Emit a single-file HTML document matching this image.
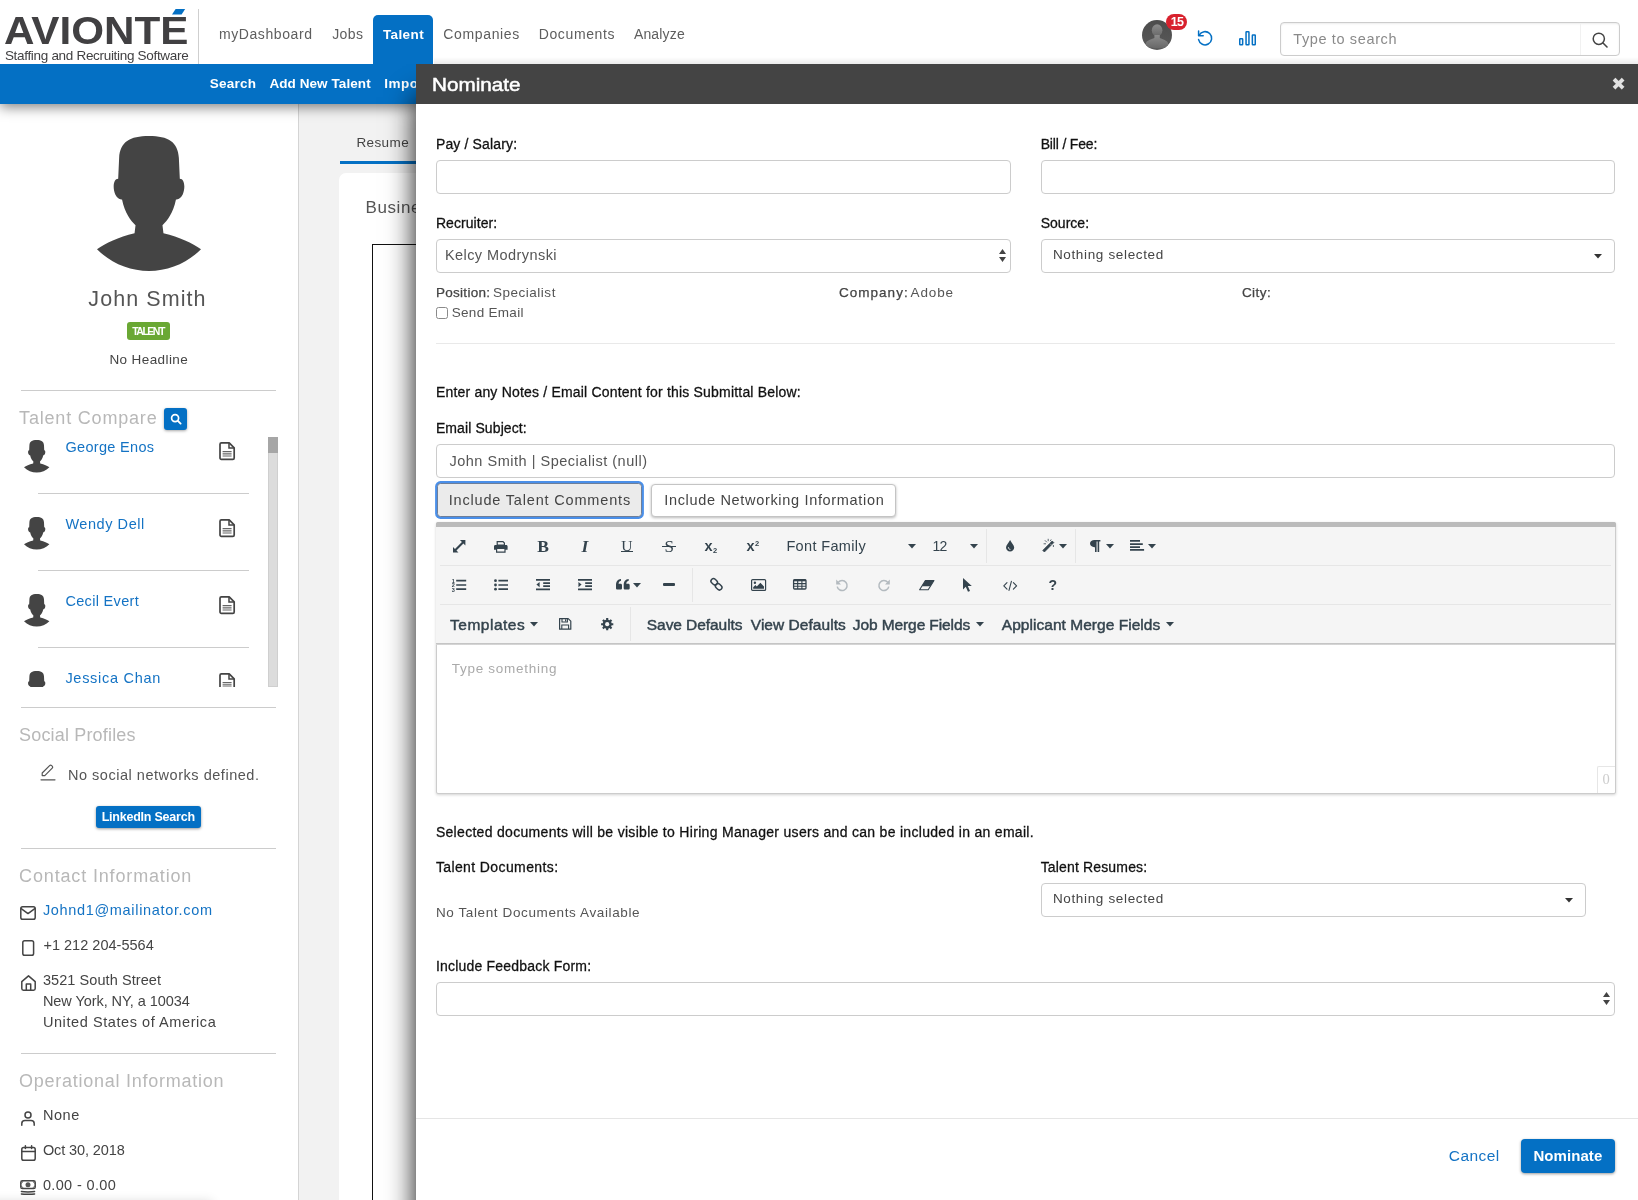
<!DOCTYPE html>
<html lang="en"><head><meta charset="utf-8"><title>Nominate - John Smith</title>
<style>
*{box-sizing:border-box;margin:0;padding:0}
html,body{width:1638px;height:1200px;overflow:hidden;background:#fff;font-family:"Liberation Sans",sans-serif}
body{position:relative;will-change:transform}
.t{position:absolute;white-space:nowrap;display:block}
.a{position:absolute}
svg{position:absolute;overflow:visible}
.hr{position:absolute;height:1px;background:#ccc}
.inp{position:absolute;border:1px solid #ccc;border-radius:4px;background:#fff}
</style></head>
<body>
<div class="a" style="left:299px;top:104px;width:1339px;height:1096px;background:#f2f2f2"></div>
<div class="a" style="left:298px;top:104px;width:1px;height:1096px;background:#d4d4d4"></div>
<span class="t" style="left:356.4px;top:133px;font-size:13.5px;line-height:20px;color:#444;font-family:'Liberation Sans',sans-serif;letter-spacing:0.406px;">Resume</span>
<div class="a" style="left:340px;top:161px;width:120px;height:3px;background:#0470c4"></div>
<div class="a" style="left:339px;top:173px;width:1200px;height:1100px;background:#fff;border-radius:7px"></div>
<span class="t" style="left:365.5px;top:193px;font-size:17px;line-height:30px;color:#555;font-family:'Liberation Sans',sans-serif;letter-spacing:.6px;">Business</span>
<div class="a" style="left:372px;top:244px;width:900px;height:1000px;border:1.5px solid #111"></div>
<div class="a" style="left:0;top:104px;width:298px;height:1096px;background:#fff"></div>
<svg style="left:97px;top:135.5px" width="104" height="135" viewBox="-4 0 108 136" preserveAspectRatio="none"><path d="M50 0 C70 0 80 6 81 22 L82 43 C87 43 88 52 85 59 C83 63 80 64 78 64 C75 78 69 85 64 90 L65 98 C82 102 95 108 104 114 C90 128 70 136 50 136 C30 136 10 128 -4 114 C5 108 18 102 35 98 L36 90 C31 85 25 78 22 64 C20 64 17 63 15 59 C12 52 13 43 18 43 L19 22 C20 6 30 0 50 0 Z" fill="#444"/></svg>
<span class="t" style="left:88.3px;top:284px;font-size:21.5px;line-height:30px;color:#555;font-family:'Liberation Sans',sans-serif;letter-spacing:1.081px;">John Smith</span>
<div class="a" style="left:127px;top:322px;width:43px;height:18px;background:#6aa834;border-radius:3px"></div>
<span class="t" style="left:132.2px;top:321px;font-size:10.5px;line-height:20px;color:#fff;font-family:'Liberation Sans',sans-serif;font-weight:700;letter-spacing:-1.502px;">TALENT</span>
<span class="t" style="left:109.4px;top:350px;font-size:13.5px;line-height:20px;color:#444;font-family:'Liberation Sans',sans-serif;letter-spacing:0.401px;">No Headline</span>
<div class="hr" style="left:21px;top:390px;width:255px"></div>
<span class="t" style="left:19.1px;top:403px;font-size:18px;line-height:30px;color:#b8b8b8;font-family:'Liberation Sans',sans-serif;letter-spacing:0.808px;">Talent Compare</span>
<div class="a" style="left:164px;top:408px;width:23px;height:22px;background:#0470c4;border-radius:3px;box-shadow:0 1px 3px rgba(0,0,0,.35)"></div>
<svg style="left:169.5px;top:413px" width="12" height="12" viewBox="0 0 12 12"><circle cx="5.1" cy="5.1" r="3.5" fill="none" stroke="#fff" stroke-width="1.7"/><path d="M7.9 7.9 L10.6 10.6" stroke="#fff" stroke-width="1.9" stroke-linecap="round"/></svg>
<div class="a" style="left:0;top:437px;width:280px;height:250px;overflow:hidden">
<svg style="left:23.5px;top:3.0px" width="25.4" height="32.5" viewBox="-4 0 108 136" preserveAspectRatio="none"><path d="M50 0 C70 0 80 6 81 22 L82 43 C87 43 88 52 85 59 C83 63 80 64 78 64 C75 78 69 85 64 90 L65 98 C82 102 95 108 104 114 C90 128 70 136 50 136 C30 136 10 128 -4 114 C5 108 18 102 35 98 L36 90 C31 85 25 78 22 64 C20 64 17 63 15 59 C12 52 13 43 18 43 L19 22 C20 6 30 0 50 0 Z" fill="#444"/></svg>
<span class="t" style="left:65.4px;top:0px;font-size:14.5px;line-height:20px;color:#1473c4;font-family:'Liberation Sans',sans-serif;letter-spacing:0.322px;">George Enos</span>
<svg style="left:219px;top:5.2px" width="16.2" height="18.2" viewBox="0 0 16.2 18.2"><path d="M1 2.2 C1 1.4 1.6 .8 2.4 .8 L10.2 .8 L15.2 5.8 L15.2 16 C15.2 16.8 14.6 17.4 13.8 17.4 L2.4 17.4 C1.6 17.4 1 16.8 1 16 Z" fill="#fff" stroke="#444" stroke-width="1.7" stroke-linejoin="round"/><path d="M10 1 L10 6 L15 6" fill="none" stroke="#444" stroke-width="1.5"/><path d="M3.6 9.6 H12.6 M3.6 11.8 H12.6 M3.6 14 H12.6" stroke="#666" stroke-width="1.2"/></svg>
<div class="hr" style="left:38px;top:56px;width:211px"></div>
<svg style="left:23.5px;top:80.0px" width="25.4" height="32.5" viewBox="-4 0 108 136" preserveAspectRatio="none"><path d="M50 0 C70 0 80 6 81 22 L82 43 C87 43 88 52 85 59 C83 63 80 64 78 64 C75 78 69 85 64 90 L65 98 C82 102 95 108 104 114 C90 128 70 136 50 136 C30 136 10 128 -4 114 C5 108 18 102 35 98 L36 90 C31 85 25 78 22 64 C20 64 17 63 15 59 C12 52 13 43 18 43 L19 22 C20 6 30 0 50 0 Z" fill="#444"/></svg>
<span class="t" style="left:65.4px;top:77px;font-size:14.5px;line-height:20px;color:#1473c4;font-family:'Liberation Sans',sans-serif;letter-spacing:0.555px;">Wendy Dell</span>
<svg style="left:219px;top:82.2px" width="16.2" height="18.2" viewBox="0 0 16.2 18.2"><path d="M1 2.2 C1 1.4 1.6 .8 2.4 .8 L10.2 .8 L15.2 5.8 L15.2 16 C15.2 16.8 14.6 17.4 13.8 17.4 L2.4 17.4 C1.6 17.4 1 16.8 1 16 Z" fill="#fff" stroke="#444" stroke-width="1.7" stroke-linejoin="round"/><path d="M10 1 L10 6 L15 6" fill="none" stroke="#444" stroke-width="1.5"/><path d="M3.6 9.6 H12.6 M3.6 11.8 H12.6 M3.6 14 H12.6" stroke="#666" stroke-width="1.2"/></svg>
<div class="hr" style="left:38px;top:133px;width:211px"></div>
<svg style="left:23.5px;top:157.0px" width="25.4" height="32.5" viewBox="-4 0 108 136" preserveAspectRatio="none"><path d="M50 0 C70 0 80 6 81 22 L82 43 C87 43 88 52 85 59 C83 63 80 64 78 64 C75 78 69 85 64 90 L65 98 C82 102 95 108 104 114 C90 128 70 136 50 136 C30 136 10 128 -4 114 C5 108 18 102 35 98 L36 90 C31 85 25 78 22 64 C20 64 17 63 15 59 C12 52 13 43 18 43 L19 22 C20 6 30 0 50 0 Z" fill="#444"/></svg>
<span class="t" style="left:65.4px;top:154px;font-size:14.5px;line-height:20px;color:#1473c4;font-family:'Liberation Sans',sans-serif;letter-spacing:0.326px;">Cecil Evert</span>
<svg style="left:219px;top:159.2px" width="16.2" height="18.2" viewBox="0 0 16.2 18.2"><path d="M1 2.2 C1 1.4 1.6 .8 2.4 .8 L10.2 .8 L15.2 5.8 L15.2 16 C15.2 16.8 14.6 17.4 13.8 17.4 L2.4 17.4 C1.6 17.4 1 16.8 1 16 Z" fill="#fff" stroke="#444" stroke-width="1.7" stroke-linejoin="round"/><path d="M10 1 L10 6 L15 6" fill="none" stroke="#444" stroke-width="1.5"/><path d="M3.6 9.6 H12.6 M3.6 11.8 H12.6 M3.6 14 H12.6" stroke="#666" stroke-width="1.2"/></svg>
<div class="hr" style="left:38px;top:210px;width:211px"></div>
<svg style="left:23.5px;top:234.0px" width="25.4" height="32.5" viewBox="-4 0 108 136" preserveAspectRatio="none"><path d="M50 0 C70 0 80 6 81 22 L82 43 C87 43 88 52 85 59 C83 63 80 64 78 64 C75 78 69 85 64 90 L65 98 C82 102 95 108 104 114 C90 128 70 136 50 136 C30 136 10 128 -4 114 C5 108 18 102 35 98 L36 90 C31 85 25 78 22 64 C20 64 17 63 15 59 C12 52 13 43 18 43 L19 22 C20 6 30 0 50 0 Z" fill="#444"/></svg>
<span class="t" style="left:65.4px;top:231px;font-size:14.5px;line-height:20px;color:#1473c4;font-family:'Liberation Sans',sans-serif;letter-spacing:0.711px;">Jessica Chan</span>
<svg style="left:219px;top:236.2px" width="16.2" height="18.2" viewBox="0 0 16.2 18.2"><path d="M1 2.2 C1 1.4 1.6 .8 2.4 .8 L10.2 .8 L15.2 5.8 L15.2 16 C15.2 16.8 14.6 17.4 13.8 17.4 L2.4 17.4 C1.6 17.4 1 16.8 1 16 Z" fill="#fff" stroke="#444" stroke-width="1.7" stroke-linejoin="round"/><path d="M10 1 L10 6 L15 6" fill="none" stroke="#444" stroke-width="1.5"/><path d="M3.6 9.6 H12.6 M3.6 11.8 H12.6 M3.6 14 H12.6" stroke="#666" stroke-width="1.2"/></svg>
<div class="hr" style="left:38px;top:287px;width:211px"></div>
<div class="a" style="left:268px;top:0;width:10px;height:250px;background:#dcdcdc;border:1px solid #cfcfcf"></div>
<div class="a" style="left:268px;top:0;width:10px;height:16px;background:#a6a6a6"></div>
</div>
<div class="hr" style="left:21px;top:707px;width:255px"></div>
<span class="t" style="left:19.1px;top:720px;font-size:18px;line-height:30px;color:#b8b8b8;font-family:'Liberation Sans',sans-serif;letter-spacing:0.167px;">Social Profiles</span>
<svg style="left:39.5px;top:764px" width="16" height="17" viewBox="0 0 16 17"><path d="M2.2 11.6 L2.2 9 L9.6 1.6 C10.2 1 11 1 11.6 1.6 L12.2 2.2 C12.8 2.8 12.8 3.6 12.2 4.2 L4.8 11.6 Z" fill="none" stroke="#555" stroke-width="1.2" stroke-linejoin="round"/><path d="M1 15.8 H15" stroke="#555" stroke-width="1.2" stroke-linecap="round"/></svg>
<span class="t" style="left:67.9px;top:765px;font-size:14.5px;line-height:20px;color:#555;font-family:'Liberation Sans',sans-serif;letter-spacing:0.529px;">No social networks defined.</span>
<div class="a" style="left:96px;top:806px;width:105px;height:21.5px;background:#0470c4;border-radius:3px;box-shadow:0 1px 3px rgba(0,0,0,.4)"></div>
<span class="t" style="left:101.7px;top:807px;font-size:12.5px;line-height:20px;color:#fff;font-family:'Liberation Sans',sans-serif;font-weight:700;letter-spacing:-0.229px;">LinkedIn Search</span>
<div class="hr" style="left:21px;top:848px;width:255px"></div>
<span class="t" style="left:19.1px;top:861px;font-size:18px;line-height:30px;color:#b8b8b8;font-family:'Liberation Sans',sans-serif;letter-spacing:0.845px;">Contact Information</span>
<svg style="left:20px;top:906px" width="16" height="14" viewBox="0 0 16 14"><rect x=".8" y=".8" width="14.4" height="12.4" rx="1.8" fill="none" stroke="#444" stroke-width="1.5" stroke-linejoin="round" stroke-linecap="round"/><path d="M1.2 2.6 L8 7.6 L14.8 2.6" fill="none" stroke="#444" stroke-width="1.5" stroke-linejoin="round" stroke-linecap="round"/></svg>
<span class="t" style="left:42.9px;top:900px;font-size:14.5px;line-height:20px;color:#1473c4;font-family:'Liberation Sans',sans-serif;letter-spacing:0.669px;">Johnd1@mailinator.com</span>
<svg style="left:21.8px;top:940px" width="12.4" height="16" viewBox="0 0 12.4 16"><rect x=".8" y=".8" width="10.8" height="14.4" rx="1.8" fill="none" stroke="#444" stroke-width="1.5" stroke-linejoin="round" stroke-linecap="round"/></svg>
<span class="t" style="left:43.4px;top:935px;font-size:14.5px;line-height:20px;color:#444;font-family:'Liberation Sans',sans-serif;letter-spacing:0.022px;">+1 212 204-5564</span>
<svg style="left:20.5px;top:975px" width="15" height="16" viewBox="0 0 15 16"><path d="M.8 6.6 L7.5 .9 L14.2 6.6 L14.2 13.6 C14.2 14.6 13.6 15.2 12.6 15.2 L2.4 15.2 C1.4 15.2 .8 14.6 .8 13.6 Z" fill="none" stroke="#444" stroke-width="1.5" stroke-linejoin="round" stroke-linecap="round"/><path d="M5.3 15 L5.3 9 L9.7 9 L9.7 15" fill="none" stroke="#444" stroke-width="1.5" stroke-linejoin="round" stroke-linecap="round"/></svg>
<span class="t" style="left:42.9px;top:970px;font-size:14.5px;line-height:20px;color:#444;font-family:'Liberation Sans',sans-serif;letter-spacing:0.079px;">3521 South Street</span>
<span class="t" style="left:42.9px;top:991px;font-size:14.5px;line-height:20px;color:#444;font-family:'Liberation Sans',sans-serif;letter-spacing:-0.060px;">New York, NY, a 10034</span>
<span class="t" style="left:42.9px;top:1012px;font-size:14.5px;line-height:20px;color:#444;font-family:'Liberation Sans',sans-serif;letter-spacing:0.578px;">United States of America</span>
<div class="hr" style="left:21px;top:1053px;width:255px"></div>
<span class="t" style="left:19.1px;top:1066px;font-size:18px;line-height:30px;color:#b8b8b8;font-family:'Liberation Sans',sans-serif;letter-spacing:0.740px;">Operational Information</span>
<svg style="left:21px;top:1110.5px" width="14" height="15" viewBox="0 0 14 15"><circle cx="7" cy="4" r="3" fill="none" stroke="#444" stroke-width="1.5" stroke-linejoin="round" stroke-linecap="round"/><path d="M.8 14.2 L.8 12.4 C.8 10.4 2.4 9.4 4 9.4 L10 9.4 C11.6 9.4 13.2 10.4 13.2 12.4 L13.2 14.2" fill="none" stroke="#444" stroke-width="1.5" stroke-linejoin="round" stroke-linecap="round"/></svg>
<span class="t" style="left:42.9px;top:1105px;font-size:14.5px;line-height:20px;color:#444;font-family:'Liberation Sans',sans-serif;letter-spacing:0.566px;">None</span>
<svg style="left:20.5px;top:1145px" width="15" height="16" viewBox="0 0 15 16"><rect x=".8" y="2.4" width="13.4" height="12.8" rx="1.8" fill="none" stroke="#444" stroke-width="1.5" stroke-linejoin="round" stroke-linecap="round"/><path d="M.8 6.6 H14.2 M4.4 .8 V3.6 M10.6 .8 V3.6" fill="none" stroke="#444" stroke-width="1.5" stroke-linejoin="round" stroke-linecap="round"/></svg>
<span class="t" style="left:42.9px;top:1140px;font-size:14.5px;line-height:20px;color:#444;font-family:'Liberation Sans',sans-serif;letter-spacing:-0.106px;">Oct 30, 2018</span>
<svg style="left:20.3px;top:1180.3px" width="16" height="15" viewBox="0 0 16 15"><rect x=".8" y=".8" width="14.4" height="7.8" rx="1.6" fill="none" stroke="#444" stroke-width="1.5" stroke-linejoin="round" stroke-linecap="round"/><circle cx="8" cy="4.7" r="2.5" fill="#555"/><path d="M.9 3.2 C2 3.2 2.8 2.4 2.8 1.2 M15.1 3.2 C14 3.2 13.2 2.4 13.2 1.2 M.9 6.2 C2 6.2 2.8 7 2.8 8.2 M15.1 6.2 C14 6.2 13.2 7 13.2 8.2" fill="none" stroke="#444" stroke-width=".8"/><path d="M1.4 11.5 C4 12 12 12 14.6 11.5 M1.4 13.9 C4 14.4 12 14.4 14.6 13.9" fill="none" stroke="#444" stroke-width="1.5" stroke-linejoin="round" stroke-linecap="round"/></svg>
<span class="t" style="left:42.9px;top:1175px;font-size:14.5px;line-height:20px;color:#444;font-family:'Liberation Sans',sans-serif;letter-spacing:0.354px;">0.00 - 0.00</span>
<div class="a" style="left:-30px;top:1204px;width:240px;height:10px;box-shadow:0 0 12px 2px rgba(0,0,0,.16)"></div>
<div class="a" style="left:0;top:64px;width:1638px;height:40px;background:#0470c4;box-shadow:0 3px 13px rgba(0,0,0,.5)"></div>
<span class="t" style="left:209.7px;top:74px;font-size:13.5px;line-height:20px;color:#fff;font-family:'Liberation Sans',sans-serif;font-weight:700;letter-spacing:0.256px;">Search</span>
<span class="t" style="left:269.4px;top:74px;font-size:13.5px;line-height:20px;color:#fff;font-family:'Liberation Sans',sans-serif;font-weight:700;letter-spacing:0.080px;">Add New Talent</span>
<span class="t" style="left:384.3px;top:74px;font-size:13.5px;line-height:20px;color:#fff;font-family:'Liberation Sans',sans-serif;font-weight:700;letter-spacing:.5px;">Import</span>
<div class="a" style="left:416px;top:97px;width:1222px;height:1200px;box-shadow:0 0 27px rgba(0,0,0,.95)"></div>
<div class="a" style="left:416px;top:64px;width:1222px;height:1136px;background:#fff"></div>
<div class="a" style="left:416px;top:64px;width:1222px;height:40px;background:#444"></div>
<span class="t" style="left:432.4px;top:70px;font-size:19px;line-height:30px;color:#fff;font-family:'Liberation Sans',sans-serif;transform:scaleX(1.0887);transform-origin:0 0;-webkit-text-stroke:0.50px #fff;">Nominate</span>
<span class="t" style="left:1611.2px;top:69px;font-size:17.5px;line-height:30px;color:#e2e2e2;font-family:'DejaVu Sans',sans-serif;font-weight:700;">&#10006;</span>
<span class="t" style="left:435.9px;top:134px;font-size:14px;line-height:20px;color:#111;font-family:'Liberation Sans',sans-serif;letter-spacing:0.155px;-webkit-text-stroke:0.28px #111;">Pay / Salary:</span>
<div class="inp" style="left:436px;top:160px;width:575px;height:34px"></div>
<span class="t" style="left:1040.7px;top:134px;font-size:14px;line-height:20px;color:#111;font-family:'Liberation Sans',sans-serif;letter-spacing:-0.172px;-webkit-text-stroke:0.28px #111;">Bill / Fee:</span>
<div class="inp" style="left:1041px;top:160px;width:574px;height:34px"></div>
<span class="t" style="left:435.9px;top:213px;font-size:14px;line-height:20px;color:#111;font-family:'Liberation Sans',sans-serif;letter-spacing:0.073px;-webkit-text-stroke:0.28px #111;">Recruiter:</span>
<div class="inp" style="left:436px;top:239px;width:575px;height:34px"></div>
<span class="t" style="left:444.9px;top:245px;font-size:14.5px;line-height:20px;color:#555;font-family:'Liberation Sans',sans-serif;letter-spacing:0.436px;">Kelcy Modrynski</span>
<svg style="left:999.3px;top:249.3px" width="7" height="13" viewBox="0 0 7 13"><path d="M0 5 L3.5 0 L7 5 Z M0 8 L3.5 13 L7 8 Z" fill="#444"/></svg>
<span class="t" style="left:1040.7px;top:213px;font-size:14px;line-height:20px;color:#111;font-family:'Liberation Sans',sans-serif;letter-spacing:0.015px;-webkit-text-stroke:0.28px #111;">Source:</span>
<div class="inp" style="left:1041px;top:239px;width:574px;height:34px"></div>
<span class="t" style="left:1052.9px;top:245px;font-size:13.5px;line-height:20px;color:#444;font-family:'Liberation Sans',sans-serif;letter-spacing:0.655px;">Nothing selected</span>
<svg style="left:1593.6px;top:253.6px" width="8" height="4.4" viewBox="0 0 8 4.4"><path d="M0 0 L8 0 L4 4.4 Z" fill="#333"/></svg>
<span class="t" style="left:435.9px;top:283px;font-size:13.5px;line-height:20px;color:#444;font-family:'Liberation Sans',sans-serif;letter-spacing:0.304px;-webkit-text-stroke:0.25px #444;">Position:</span>
<span class="t" style="left:492.9px;top:283px;font-size:13.5px;line-height:20px;color:#555;font-family:'Liberation Sans',sans-serif;letter-spacing:0.525px;">Specialist</span>
<span class="t" style="left:838.9px;top:283px;font-size:13.5px;line-height:20px;color:#444;font-family:'Liberation Sans',sans-serif;letter-spacing:1.040px;-webkit-text-stroke:0.25px #444;">Company:</span>
<span class="t" style="left:910.6px;top:283px;font-size:13.5px;line-height:20px;color:#555;font-family:'Liberation Sans',sans-serif;letter-spacing:0.866px;">Adobe</span>
<span class="t" style="left:1241.9px;top:283px;font-size:13.5px;line-height:20px;color:#444;font-family:'Liberation Sans',sans-serif;letter-spacing:0.452px;-webkit-text-stroke:0.25px #444;">City:</span>
<div class="a" style="left:436px;top:307.2px;width:12px;height:11.8px;border:1px solid #8a8a8a;border-radius:2.5px;background:#fff"></div>
<span class="t" style="left:451.7px;top:303px;font-size:13.5px;line-height:20px;color:#555;font-family:'Liberation Sans',sans-serif;letter-spacing:0.307px;">Send Email</span>
<div class="hr" style="left:436px;top:343px;width:1179px;background:#e9e9e9"></div>
<span class="t" style="left:435.9px;top:382px;font-size:14px;line-height:20px;color:#111;font-family:'Liberation Sans',sans-serif;letter-spacing:0.193px;-webkit-text-stroke:0.28px #111;">Enter any Notes / Email Content for this Submittal Below:</span>
<span class="t" style="left:435.9px;top:418px;font-size:14px;line-height:20px;color:#111;font-family:'Liberation Sans',sans-serif;letter-spacing:0.104px;-webkit-text-stroke:0.28px #111;">Email Subject:</span>
<div class="inp" style="left:436px;top:444px;width:1179px;height:34px"></div>
<span class="t" style="left:449.4px;top:451px;font-size:14.5px;line-height:20px;color:#555;font-family:'Liberation Sans',sans-serif;letter-spacing:0.517px;">John Smith | Specialist (null)</span>
<div class="a" style="left:436.6px;top:483.2px;width:205.8px;height:34px;background:#ebebeb;border:1px solid #6d7f9a;border-radius:3.5px;box-shadow:0 0 0 1.9px #4a8fe9"></div>
<span class="t" style="left:448.7px;top:490px;font-size:14.5px;line-height:20px;color:#444;font-family:'Liberation Sans',sans-serif;letter-spacing:0.823px;">Include Talent Comments</span>
<div class="a" style="left:651px;top:483.5px;width:245px;height:33.5px;background:#fff;border:1px solid #c4c4c4;border-radius:4px;box-shadow:0 1px 3px rgba(0,0,0,.28)"></div>
<span class="t" style="left:664.2px;top:490px;font-size:14.5px;line-height:20px;color:#444;font-family:'Liberation Sans',sans-serif;letter-spacing:0.679px;">Include Networking Information</span>
<div class="a" style="left:435.5px;top:522px;width:1180px;height:271.5px;background:#fff;border:1px solid #ccc;border-radius:2px;box-shadow:0 1px 3px rgba(0,0,0,.18)"></div>
<div class="a" style="left:436px;top:527px;width:1179px;height:116px;background:#f5f5f5"></div>
<div class="a" style="left:435.5px;top:522px;width:1180px;height:5px;background:#bbb;border-radius:2px 2px 0 0"></div>
<div class="a" style="left:436px;top:643px;width:1179px;height:2px;background:linear-gradient(#bdbdbd,#dcdcdc)"></div>
<div class="a" style="left:440px;top:565px;width:1171px;height:1px;background:#e6e6e6"></div>
<div class="a" style="left:440px;top:604px;width:1171px;height:1px;background:#e6e6e6"></div>
<div class="a" style="left:986px;top:529px;width:1px;height:34px;background:#e6e6e6"></div>
<div class="a" style="left:1075px;top:529px;width:1px;height:34px;background:#e6e6e6"></div>
<div class="a" style="left:692px;top:568px;width:1px;height:34px;background:#e6e6e6"></div>
<div class="a" style="left:630px;top:607px;width:1px;height:34px;background:#e6e6e6"></div>
<span class="t" style="left:451.7px;top:659px;font-size:13.5px;line-height:20px;color:#aaa;font-family:'Liberation Sans',sans-serif;letter-spacing:0.731px;">Type something</span>
<div class="a" style="left:1597px;top:766px;width:18px;height:27px;border-left:1px solid #e6e6e6;border-top:1px solid #e6e6e6;border-radius:2px 0 0 0"></div>
<span class="t" style="left:1602.6px;top:769px;font-size:14.5px;line-height:20px;color:#ccc;font-family:'Liberation Serif',serif;">0</span>
<span class="t" style="left:435.9px;top:822px;font-size:14px;line-height:20px;color:#111;font-family:'Liberation Sans',sans-serif;letter-spacing:0.304px;-webkit-text-stroke:0.28px #111;">Selected documents will be visible to Hiring Manager users and can be included in an email.</span>
<span class="t" style="left:435.9px;top:857px;font-size:14px;line-height:20px;color:#111;font-family:'Liberation Sans',sans-serif;letter-spacing:0.387px;-webkit-text-stroke:0.28px #111;">Talent Documents:</span>
<span class="t" style="left:435.9px;top:903px;font-size:13.5px;line-height:20px;color:#555;font-family:'Liberation Sans',sans-serif;letter-spacing:0.616px;">No Talent Documents Available</span>
<span class="t" style="left:1040.7px;top:857px;font-size:14px;line-height:20px;color:#111;font-family:'Liberation Sans',sans-serif;letter-spacing:0.154px;-webkit-text-stroke:0.28px #111;">Talent Resumes:</span>
<div class="inp" style="left:1041px;top:883px;width:545px;height:34px"></div>
<span class="t" style="left:1052.9px;top:889px;font-size:13.5px;line-height:20px;color:#444;font-family:'Liberation Sans',sans-serif;letter-spacing:0.655px;">Nothing selected</span>
<svg style="left:1564.6px;top:897.6px" width="8" height="4.4" viewBox="0 0 8 4.4"><path d="M0 0 L8 0 L4 4.4 Z" fill="#333"/></svg>
<span class="t" style="left:435.9px;top:956px;font-size:14px;line-height:20px;color:#111;font-family:'Liberation Sans',sans-serif;letter-spacing:0.203px;-webkit-text-stroke:0.28px #111;">Include Feedback Form:</span>
<div class="inp" style="left:436px;top:982px;width:1179px;height:34px"></div>
<svg style="left:1602.6px;top:992.3px" width="7" height="13" viewBox="0 0 7 13"><path d="M0 5 L3.5 0 L7 5 Z M0 8 L3.5 13 L7 8 Z" fill="#444"/></svg>
<div class="a" style="left:416px;top:1118px;width:1222px;height:1px;background:#e5e5e5"></div>
<span class="t" style="left:1448.8px;top:1146px;font-size:15.5px;line-height:20px;color:#1473c4;font-family:'Liberation Sans',sans-serif;letter-spacing:0.436px;">Cancel</span>
<div class="a" style="left:1520.5px;top:1139px;width:94.5px;height:33.5px;background:#0470c4;border-radius:4px;box-shadow:0 1px 3px rgba(0,0,0,.4)"></div>
<span class="t" style="left:1533.4px;top:1146px;font-size:15px;line-height:20px;color:#fff;font-family:'Liberation Sans',sans-serif;font-weight:700;letter-spacing:0.079px;">Nominate</span>
<svg style="left:452.8px;top:540.0px" width="12.4" height="12.4" viewBox="0 0 12.4 12.4"><path transform="scale(.992)" d="M7 0 L12.5 0 L12.5 5.5 L10.5 3.5 L3.5 10.5 L5.5 12.5 L0 12.5 L0 7 L2 9 L9 2 Z" fill="#34434d"/></svg>
<svg style="left:494.3px;top:540.5px" width="13.6" height="11.6" viewBox="0 0 13.6 11.6"><path d="M3.2 .6 L9 .6 L10.4 2 L10.4 4.2 L3.2 4.2 Z" fill="none" stroke="#34434d" stroke-width="1.2"/><path d="M1.4 4 L12.2 4 C13 4 13.6 4.6 13.6 5.4 L13.6 8.8 L11 8.8 L11 7.2 L2.6 7.2 L2.6 8.8 L0 8.8 L0 5.4 C0 4.6 .6 4 1.4 4 Z" fill="#34434d"/><path d="M2.6 7.4 L11 7.4 L11 11.2 L2.6 11.2 Z" fill="none" stroke="#34434d" stroke-width="1.2"/></svg>
<span class="t" style="left:537.2px;top:531px;font-size:17.5px;line-height:30px;color:#34434d;font-family:'Liberation Serif',serif;font-weight:700;">B</span>
<span class="t" style="left:581.6px;top:531px;font-size:17.5px;line-height:30px;color:#34434d;font-family:'Liberation Serif',serif;font-weight:700;font-style:italic;">I</span>
<span class="t" style="left:621.2px;top:536px;font-size:15.5px;line-height:20px;color:#34434d;font-family:'Liberation Serif',serif;">U</span>
<div class="a" style="left:621px;top:551.3px;width:12px;height:1.1px;background:#34434d"></div>
<span class="t" style="left:664.6px;top:532px;font-size:17px;line-height:30px;color:#34434d;font-family:'Liberation Serif',serif;">S</span>
<div class="a" style="left:662px;top:545.6px;width:14px;height:1.1px;background:#34434d"></div>
<span class="t" style="left:704.6px;top:536px;font-size:14.5px;line-height:20px;color:#34434d;font-family:'Liberation Sans',sans-serif;font-weight:700;">x</span>
<span class="t" style="left:713.0px;top:541px;font-size:7.5px;line-height:20px;color:#34434d;font-family:'Liberation Sans',sans-serif;font-weight:700;">2</span>
<span class="t" style="left:746.6px;top:536px;font-size:14.5px;line-height:20px;color:#34434d;font-family:'Liberation Sans',sans-serif;font-weight:700;">x</span>
<span class="t" style="left:755.0px;top:534px;font-size:7.5px;line-height:20px;color:#34434d;font-family:'Liberation Sans',sans-serif;font-weight:700;">2</span>
<span class="t" style="left:786.4px;top:536px;font-size:14.5px;line-height:20px;color:#34434d;font-family:'Liberation Sans',sans-serif;letter-spacing:0.352px;">Font Family</span>
<svg style="left:908.1px;top:544.0px" width="8" height="4.4" viewBox="0 0 8 4.4"><path d="M0 0 L8 0 L4 4.4 Z" fill="#34434d"/></svg>
<span class="t" style="left:932.6px;top:536px;font-size:14px;line-height:20px;color:#34434d;font-family:'Liberation Sans',sans-serif;letter-spacing:-1px;">12</span>
<svg style="left:970.0px;top:544.0px" width="8" height="4.4" viewBox="0 0 8 4.4"><path d="M0 0 L8 0 L4 4.4 Z" fill="#34434d"/></svg>
<svg style="left:1005.8px;top:539.8px" width="8.2" height="11.4" viewBox="0 0 8.2 11.4"><path d="M4.1 0 C5.4 3 8.2 5 8.2 7.4 C8.2 9.7 6.4 11.4 4.1 11.4 C1.8 11.4 0 9.7 0 7.4 C0 5 2.8 3 4.1 0 Z" fill="#34434d"/><path d="M2.4 7.6 C2.4 8.6 3.1 9.3 4 9.4" fill="none" stroke="#f5f5f5" stroke-width=".9" stroke-linecap="round"/></svg>
<svg style="left:1041.6px;top:538.8px" width="12.8" height="13.2" viewBox="0 0 12.8 13.2"><path d="M.8 11.4 L10.2 2 L11.8 3.6 L2.4 13 Z" fill="#34434d" stroke="#34434d" stroke-width=".8" stroke-linejoin="round"/><path d="M8.2 4.8 L9.2 5.8" stroke="#f5f5f5" stroke-width=".7"/><path d="M3.2 1.6 L4.6 3 M6.2 .2 L6.2 1.8 M2 4.8 L3.6 4.8 M11.4 6.4 L11.4 7.6 M9 .8 L8.4 1.8" stroke="#34434d" stroke-width=".8" stroke-linecap="round"/></svg>
<svg style="left:1059.0px;top:543.8px" width="8" height="4.4" viewBox="0 0 8 4.4"><path d="M0 0 L8 0 L4 4.4 Z" fill="#34434d"/></svg>
<svg style="left:1089.8px;top:540.0px" width="10.4" height="12" viewBox="0 0 10.4 12"><path d="M4.4 0 L10.4 0 L10.4 1.5 L9.2 1.5 L9.2 12 L7.6 12 L7.6 1.5 L6.6 1.5 L6.6 12 L5 12 L5 7.2 L4.4 7.2 C2 7.2 0 5.8 0 3.6 C0 1.4 2 0 4.4 0 Z" fill="#34434d"/></svg>
<svg style="left:1106.0px;top:543.8px" width="8" height="4.4" viewBox="0 0 8 4.4"><path d="M0 0 L8 0 L4 4.4 Z" fill="#34434d"/></svg>
<svg style="left:1129.9px;top:540.3px" width="14.1" height="10.8" viewBox="0 0 14.1 10.8"><path d="M0 .9 H10 M0 4.1 H12.8 M0 7.2 H10 M0 9.9 H14.1" stroke="#34434d" stroke-width="1.7"/></svg>
<svg style="left:1148.0px;top:543.8px" width="8" height="4.4" viewBox="0 0 8 4.4"><path d="M0 0 L8 0 L4 4.4 Z" fill="#34434d"/></svg>
<svg style="left:451.8px;top:578.0px" width="14.2" height="14" viewBox="0 0 14.2 14"><path d="M4.2 2.7 H14.2 M4.2 7 H14.2 M4.2 11.2 H14.2" stroke="#34434d" stroke-width="1.7"/></svg>
<span class="t" style="left:451.8px;top:571px;font-size:5.5px;line-height:20px;color:#34434d;font-family:'Liberation Sans',sans-serif;font-weight:700;">1</span>
<span class="t" style="left:451.8px;top:575px;font-size:5.5px;line-height:20px;color:#34434d;font-family:'Liberation Sans',sans-serif;font-weight:700;">2</span>
<span class="t" style="left:451.8px;top:580px;font-size:5.5px;line-height:20px;color:#34434d;font-family:'Liberation Sans',sans-serif;font-weight:700;">3</span>
<svg style="left:494.0px;top:578.0px" width="14" height="14" viewBox="0 0 14 14"><path d="M4.4 2.7 H14 M4.4 7 H14 M4.4 11.2 H14" stroke="#34434d" stroke-width="1.7"/><circle cx="1.5" cy="2.7" r="1.4" fill="#34434d"/><circle cx="1.5" cy="7" r="1.4" fill="#34434d"/><circle cx="1.5" cy="11.2" r="1.4" fill="#34434d"/></svg>
<svg style="left:536.0px;top:578.9px" width="14" height="11.2" viewBox="0 0 14 11.2"><path d="M0 .85 H14 M7.2 4.1 H14 M7.2 7.2 H14 M0 10.3 H14" stroke="#34434d" stroke-width="1.7"/><path d="M3.6 3 L3.6 8.2 L.4 5.6 Z" fill="#34434d"/></svg>
<svg style="left:578.0px;top:578.9px" width="14" height="11.2" viewBox="0 0 14 11.2"><path d="M0 .85 H14 M7.2 4.1 H14 M7.2 7.2 H14 M0 10.3 H14" stroke="#34434d" stroke-width="1.7"/><path d="M.4 3 L.4 8.2 L3.6 5.6 Z" fill="#34434d"/></svg>
<svg style="left:616.2px;top:579.2px" width="13.8" height="10.6" viewBox="0 0 13.8 10.6"><path d="M0 6.4 C0 2.4 1.6 .4 5 0 L5 1.8 C3.4 2.2 2.6 3.2 2.6 4.8 L4.6 4.8 C5.4 4.8 6 5.4 6 6.2 L6 9.2 C6 10 5.4 10.6 4.6 10.6 L1.4 10.6 C.6 10.6 0 10 0 9.2 Z" fill="#34434d"/><path d="M0 6.4 C0 2.4 1.6 .4 5 0 L5 1.8 C3.4 2.2 2.6 3.2 2.6 4.8 L4.6 4.8 C5.4 4.8 6 5.4 6 6.2 L6 9.2 C6 10 5.4 10.6 4.6 10.6 L1.4 10.6 C.6 10.6 0 10 0 9.2 Z" fill="#34434d" transform="translate(7.7 0)"/></svg>
<svg style="left:633.0px;top:582.6px" width="8" height="4.4" viewBox="0 0 8 4.4"><path d="M0 0 L8 0 L4 4.4 Z" fill="#34434d"/></svg>
<div class="a" style="left:663.2px;top:582.6px;width:11.6px;height:3.7px;background:#34434d;border-radius:1px"></div>
<svg style="left:709.6px;top:578.2px" width="12.8" height="12.6" viewBox="0 0 12.8 12.6"><g fill="none" stroke="#34434d" stroke-width="1.45"><rect x="-2.5" y="-3.5" width="5" height="7" rx="2.4" transform="translate(4.2 3.8) rotate(-45)"/><rect x="-2.5" y="-3.5" width="5" height="7" rx="2.4" transform="translate(8.7 8.8) rotate(-45)"/></g></svg>
<svg style="left:750.9px;top:578.8px" width="15.2" height="12" viewBox="0 0 15.2 12"><rect x=".6" y=".6" width="14" height="10.8" rx="1" fill="none" stroke="#34434d" stroke-width="1.2"/><circle cx="3.9" cy="3.7" r="1.2" fill="#34434d"/><path d="M2.2 9.8 L2.2 8.2 L4.4 6 L5.8 7.4 L9.4 3.8 L13 7.4 L13 9.8 Z" fill="#34434d"/></svg>
<svg style="left:793.2px;top:579.2px" width="13.6" height="10.6" viewBox="0 0 13.6 10.6"><rect x=".6" y=".6" width="12.4" height="9.4" rx="1" fill="none" stroke="#34434d" stroke-width="1.3"/><path d="M.6 1.4 H13" stroke="#34434d" stroke-width="1.8"/><path d="M.6 4.6 H13 M.6 7.3 H13 M4.7 1 V10 M8.9 1 V10" stroke="#34434d" stroke-width="1.1"/></svg>
<svg style="left:836.0px;top:578.8px" width="12" height="12" viewBox="0 0 12 12"><path d="M2.2 3.4 A5 5 0 1 1 1.2 7.6" fill="none" stroke="#b3babf" stroke-width="1.5"/><path d="M.2 .6 L.2 5.4 L5 5.4 Z" fill="#b3babf"/></svg>
<svg style="left:878.0px;top:578.8px" width="12" height="12" viewBox="0 0 12 12"><path d="M9.8 3.4 A5 5 0 1 0 10.8 7.6" fill="none" stroke="#b3babf" stroke-width="1.5"/><path d="M11.8 .6 L11.8 5.4 L7 5.4 Z" fill="#b3babf"/></svg>
<svg style="left:918.8px;top:579.8px" width="15.6" height="10.2" viewBox="0 0 15.6 10.2"><path d="M6.4 .5 L15 .5 L9.2 9.7 L.6 9.7 Z" fill="none" stroke="#34434d" stroke-width="1.1" stroke-linejoin="round"/><path d="M6.4 .5 L15 .5 L11.4 6.2 L2.8 6.2 Z" fill="#34434d"/></svg>
<svg style="left:962.8px;top:578.0px" width="9.6" height="14" viewBox="0 0 9.6 14"><path d="M0 0 L0 11.4 L2.8 8.8 L5 13.8 L7 12.9 L4.8 8 L8.8 8 Z" fill="#34434d"/></svg>
<svg style="left:1003.4px;top:581.0px" width="14.4" height="9.8" viewBox="0 0 14.4 9.8"><path d="M4 1.6 L.8 4.9 L4 8.2 M10.4 1.6 L13.6 4.9 L10.4 8.2 M8.4 .4 L6 9.4" fill="none" stroke="#34434d" stroke-width="1.1" stroke-linecap="round" stroke-linejoin="round"/></svg>
<span class="t" style="left:1048.6px;top:575px;font-size:14px;line-height:20px;color:#34434d;font-family:'Liberation Sans',sans-serif;font-weight:700;">?</span>
<span class="t" style="left:450.1px;top:615px;font-size:15.5px;line-height:20px;color:#34434d;font-family:'Liberation Sans',sans-serif;letter-spacing:0.497px;-webkit-text-stroke:0.45px #34434d;">Templates</span>
<svg style="left:530.0px;top:622.0px" width="8" height="4.4" viewBox="0 0 8 4.4"><path d="M0 0 L8 0 L4 4.4 Z" fill="#34434d"/></svg>
<svg style="left:559.0px;top:618.3px" width="12.4" height="11.8" viewBox="0 0 12.4 11.8"><path d="M.6 .6 L9.2 .6 L11.8 3.2 L11.8 11.2 L.6 11.2 Z" fill="none" stroke="#34434d" stroke-width="1.2" stroke-linejoin="round"/><path d="M3 .8 L3 4 L8.4 4 L8.4 .8 M6.6 1.2 V3.2" fill="none" stroke="#34434d" stroke-width="1.1"/><path d="M2.8 11 L2.8 7 L9.6 7 L9.6 11" fill="none" stroke="#34434d" stroke-width="1.1"/></svg>
<svg style="left:601.0px;top:618.1px" width="12.4" height="12.4" viewBox="0 0 12.4 12.4"><path d="M12.31 5.13 L12.31 7.27 L10.67 7.27 L10.12 8.60 L11.27 9.77 L9.77 11.27 L8.60 10.12 L7.27 10.67 L7.27 12.31 L5.13 12.31 L5.13 10.67 L3.80 10.12 L2.63 11.27 L1.13 9.77 L2.28 8.60 L1.73 7.27 L0.09 7.27 L0.09 5.13 L1.73 5.13 L2.28 3.80 L1.13 2.63 L2.63 1.13 L3.80 2.28 L5.13 1.73 L5.13 0.09 L7.27 0.09 L7.27 1.73 L8.60 2.28 L9.77 1.13 L11.27 2.63 L10.12 3.80 L10.67 5.13 Z" fill="#34434d"/><circle cx="6.2" cy="6.2" r="2.1" fill="#f5f5f5"/></svg>
<span class="t" style="left:646.8px;top:615px;font-size:15.5px;line-height:20px;color:#34434d;font-family:'Liberation Sans',sans-serif;letter-spacing:-0.064px;-webkit-text-stroke:0.45px #34434d;">Save Defaults</span>
<span class="t" style="left:750.8px;top:615px;font-size:15.5px;line-height:20px;color:#34434d;font-family:'Liberation Sans',sans-serif;letter-spacing:0.037px;-webkit-text-stroke:0.45px #34434d;">View Defaults</span>
<span class="t" style="left:852.8px;top:615px;font-size:15.5px;line-height:20px;color:#34434d;font-family:'Liberation Sans',sans-serif;letter-spacing:-0.097px;-webkit-text-stroke:0.45px #34434d;">Job Merge Fields</span>
<svg style="left:976.0px;top:622.0px" width="8" height="4.4" viewBox="0 0 8 4.4"><path d="M0 0 L8 0 L4 4.4 Z" fill="#34434d"/></svg>
<span class="t" style="left:1001.8px;top:615px;font-size:15.5px;line-height:20px;color:#34434d;font-family:'Liberation Sans',sans-serif;letter-spacing:0.036px;-webkit-text-stroke:0.45px #34434d;">Applicant Merge Fields</span>
<svg style="left:1165.7px;top:622.0px" width="8" height="4.4" viewBox="0 0 8 4.4"><path d="M0 0 L8 0 L4 4.4 Z" fill="#34434d"/></svg>
<div class="a" style="left:0;top:0;width:1638px;height:64px;background:#fff"></div>
<div class="a" style="left:434px;top:57px;width:1204px;height:7px;background:linear-gradient(to bottom,rgba(0,0,0,0),rgba(0,0,0,.075))"></div>
<span class="t" style="left:4.0px;top:15px;font-size:39.5px;line-height:30px;color:#414042;font-family:'Liberation Sans',sans-serif;font-weight:700;transform:scaleX(1.0679);transform-origin:0 0;">AVIONT&Eacute;</span>
<div class="a" style="left:160px;top:4px;width:28px;height:11.6px;background:#fff"></div>
<svg style="left:172.4px;top:9.2px" width="13.2" height="5.4" viewBox="0 0 13.2 5.4"><path d="M3.6 0 L13.2 0 L9.6 5.4 L0 5.4 Z" fill="#0470c4"/></svg>
<span class="t" style="left:4.9px;top:46px;font-size:13.5px;line-height:20px;color:#414042;font-family:'Liberation Sans',sans-serif;letter-spacing:-0.309px;">Staffing and Recruiting Software</span>
<div class="a" style="left:198px;top:9px;width:1px;height:55px;background:#cfcfcf"></div>
<span class="t" style="left:218.9px;top:24px;font-size:14px;line-height:20px;color:#5e5e5e;font-family:'Liberation Sans',sans-serif;letter-spacing:0.598px;">myDashboard</span>
<span class="t" style="left:332.2px;top:24px;font-size:14px;line-height:20px;color:#5e5e5e;font-family:'Liberation Sans',sans-serif;letter-spacing:0.421px;">Jobs</span>
<div class="a" style="left:373px;top:15px;width:60px;height:49px;background:#0470c4;border-radius:5px 5px 0 0"></div>
<span class="t" style="left:382.9px;top:25px;font-size:13.5px;line-height:20px;color:#fff;font-family:'Liberation Sans',sans-serif;font-weight:700;letter-spacing:0.409px;">Talent</span>
<span class="t" style="left:443.2px;top:24px;font-size:14px;line-height:20px;color:#5e5e5e;font-family:'Liberation Sans',sans-serif;letter-spacing:0.664px;">Companies</span>
<span class="t" style="left:538.7px;top:24px;font-size:14px;line-height:20px;color:#5e5e5e;font-family:'Liberation Sans',sans-serif;letter-spacing:0.628px;">Documents</span>
<span class="t" style="left:633.9px;top:24px;font-size:14px;line-height:20px;color:#5e5e5e;font-family:'Liberation Sans',sans-serif;letter-spacing:0.171px;">Analyze</span>
<svg style="left:1142px;top:19.8px" width="30" height="30" viewBox="0 0 30 30"><defs><linearGradient id="ag" x1="0" y1="0" x2="0" y2="1"><stop offset="0" stop-color="#8c8c8c"/><stop offset="1" stop-color="#686868"/></linearGradient><linearGradient id="bg" x1="0" y1="0" x2="0" y2="1"><stop offset="0" stop-color="#4c4c4c"/><stop offset="1" stop-color="#5a5a5a"/></linearGradient></defs><clipPath id="cp"><circle cx="15" cy="15" r="15"/></clipPath><circle cx="15" cy="15" r="15" fill="url(#bg)"/><g fill="url(#ag)" clip-path="url(#cp)"><ellipse cx="15.1" cy="10.3" rx="5.3" ry="6.1"/><path d="M12.4 15 L12.4 18 C9 19.5 5 20.4 3.9 23 L3.9 27 C8 28.6 22 28.6 26 27 L26 23 C25 20.4 21 19.5 17.8 18 L17.8 15 Z"/></g></svg>
<div class="a" style="left:1166px;top:14px;width:21px;height:16px;background:#d8212d;border-radius:8px"></div>
<span class="t" style="left:1170.8px;top:12px;font-size:12.5px;line-height:20px;color:#fff;font-family:'Liberation Sans',sans-serif;font-weight:700;letter-spacing:-0.756px;">15</span>
<svg style="left:1196.6px;top:30.2px" width="17.5" height="17" viewBox="0 0 17.5 17"><path d="M2.2 5.2 A6.6 6.6 0 1 1 1.6 9.6" fill="none" stroke="#0470c4" stroke-width="1.5" stroke-linecap="round"/><path d="M1.6 .9 L1.6 5.7 L6.2 5.7" fill="none" stroke="#0470c4" stroke-width="1.5" stroke-linecap="round" stroke-linejoin="round"/></svg>
<svg style="left:1239.4px;top:30.7px" width="17" height="14.5" viewBox="0 0 17 14.5"><g fill="none" stroke="#0470c4" stroke-width="1.5" stroke-linejoin="round"><rect x=".75" y="7.8" width="2.9" height="5.9" rx=".5"/><rect x="7.05" y=".75" width="2.9" height="12.95" rx=".5"/><rect x="13.35" y="4" width="2.9" height="9.7" rx=".5"/></g></svg>
<div class="inp" style="left:1280px;top:22px;width:340px;height:34px;box-shadow:inset 0 1px 2px rgba(0,0,0,.08)"></div>
<div class="a" style="left:1580px;top:23px;width:1px;height:32px;background:#f1f1f1"></div>
<span class="t" style="left:1293.2px;top:29px;font-size:14.5px;line-height:20px;color:#8a8a8a;font-family:'Liberation Sans',sans-serif;letter-spacing:0.635px;">Type to search</span>
<svg style="left:1592px;top:32px" width="16" height="16" viewBox="0 0 16 16"><circle cx="6.8" cy="6.8" r="5.6" fill="none" stroke="#444" stroke-width="1.5"/><path d="M11 11 L15 15" stroke="#444" stroke-width="1.6" stroke-linecap="round"/></svg>
</body></html>
